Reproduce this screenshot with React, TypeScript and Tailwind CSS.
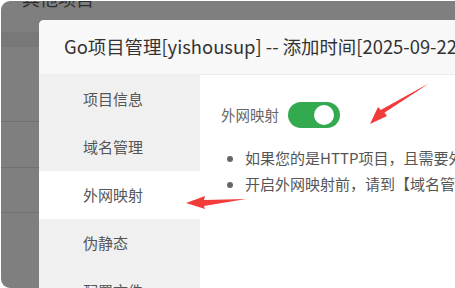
import React from 'react';

const menu = ['项目信息', '域名管理', '外网映射', '伪静态', '配置文件'];

const tips = [
  '如果您的是HTTP项目，且需要外网通过80/443访问，请开启外网映射',
  '开启外网映射前，请到【域名管理】中至少添加1个域名',
];

function Arrows() {
  return (
    <svg className="absolute inset-0 pointer-events-none" width="455" height="288" viewBox="0 0 455 288">
      {/* top right arrow pointing down-left */}
      <polygon points="428,84 384,112 387,116 370,124 378,107 381,110" fill="#f23b3b" />
      <polygon points="428,84 381,110 384,113" fill="#f23b3b" />
      {/* left arrow */}
      <polygon points="246,199 204,200 205,196 186,203 205,209 204,206" fill="#f23b3b" />
    </svg>
  );
}

export default function App() {
  return (
    <div
      className="relative w-[455px] h-[288px] bg-white overflow-hidden"
      style={{ fontFamily: '"Microsoft YaHei", "Noto Sans CJK SC", "Noto Sans", sans-serif' }}
    >
      <div className="absolute left-[1px] top-[1px] w-[470px] h-[287px] rounded-[9px] bg-[#7f7f7f] overflow-hidden">
        <div className="h-[31px] pl-[21px] overflow-hidden">
          <div className="-mt-[12px] text-[18px] leading-[18px] text-[#2e2e2e]">其他项目</div>
        </div>
        <div className="h-[15px] bg-[#787878]" />
        <div className="h-[75px] border-b border-[#707070]" />
        <div className="h-[46px] border-b border-[#707070]" />
        <div className="h-[45px] border-b border-[#707070]" />
      </div>

      <div className="absolute left-[39px] top-[20px] w-[460px] h-[300px] rounded-tl-[5px] bg-white flex flex-col overflow-hidden">
        <div className="h-[55px] shrink-0 bg-[#f8f8f8] border-b border-[#ececec] flex items-center pl-[25px] text-[18.4px] text-[#333] whitespace-nowrap">
          Go项目管理[yishousup] -- 添加时间[2025-09-22 10:30:12]
        </div>
        <div className="flex flex-1">
          <div className="w-[161px] shrink-0 bg-[#f0f0f0] flex flex-col">
            {menu.map((m, i) => (
              <div
                key={m}
                className={
                  'h-[48px] shrink-0 flex items-center pl-[44px] text-[15px] text-[#555] whitespace-nowrap ' +
                  (i === 2 ? 'bg-white' : '')
                }
              >
                {m}
              </div>
            ))}
          </div>
          <div className="flex-1 min-w-0 overflow-hidden pl-[21px] pt-[27px]">
            <div className="flex items-center gap-[9px] h-[26px]">
              <span className="text-[14.5px] text-[#666]">外网映射</span>
              <div className="w-[52px] h-[26px] rounded-full bg-[#33aa4f] flex items-center justify-end pr-[6px]">
                <div className="w-[20px] h-[20px] rounded-full bg-white" />
              </div>
            </div>
            <ul className="mt-[17px] pl-[24px] list-disc marker:text-[#666] text-[15px] text-[#555] leading-[26px] whitespace-nowrap">
              {tips.map((t) => (
                <li key={t}>{t}</li>
              ))}
            </ul>
          </div>
        </div>
      </div>

      <Arrows />
    </div>
  );
}
